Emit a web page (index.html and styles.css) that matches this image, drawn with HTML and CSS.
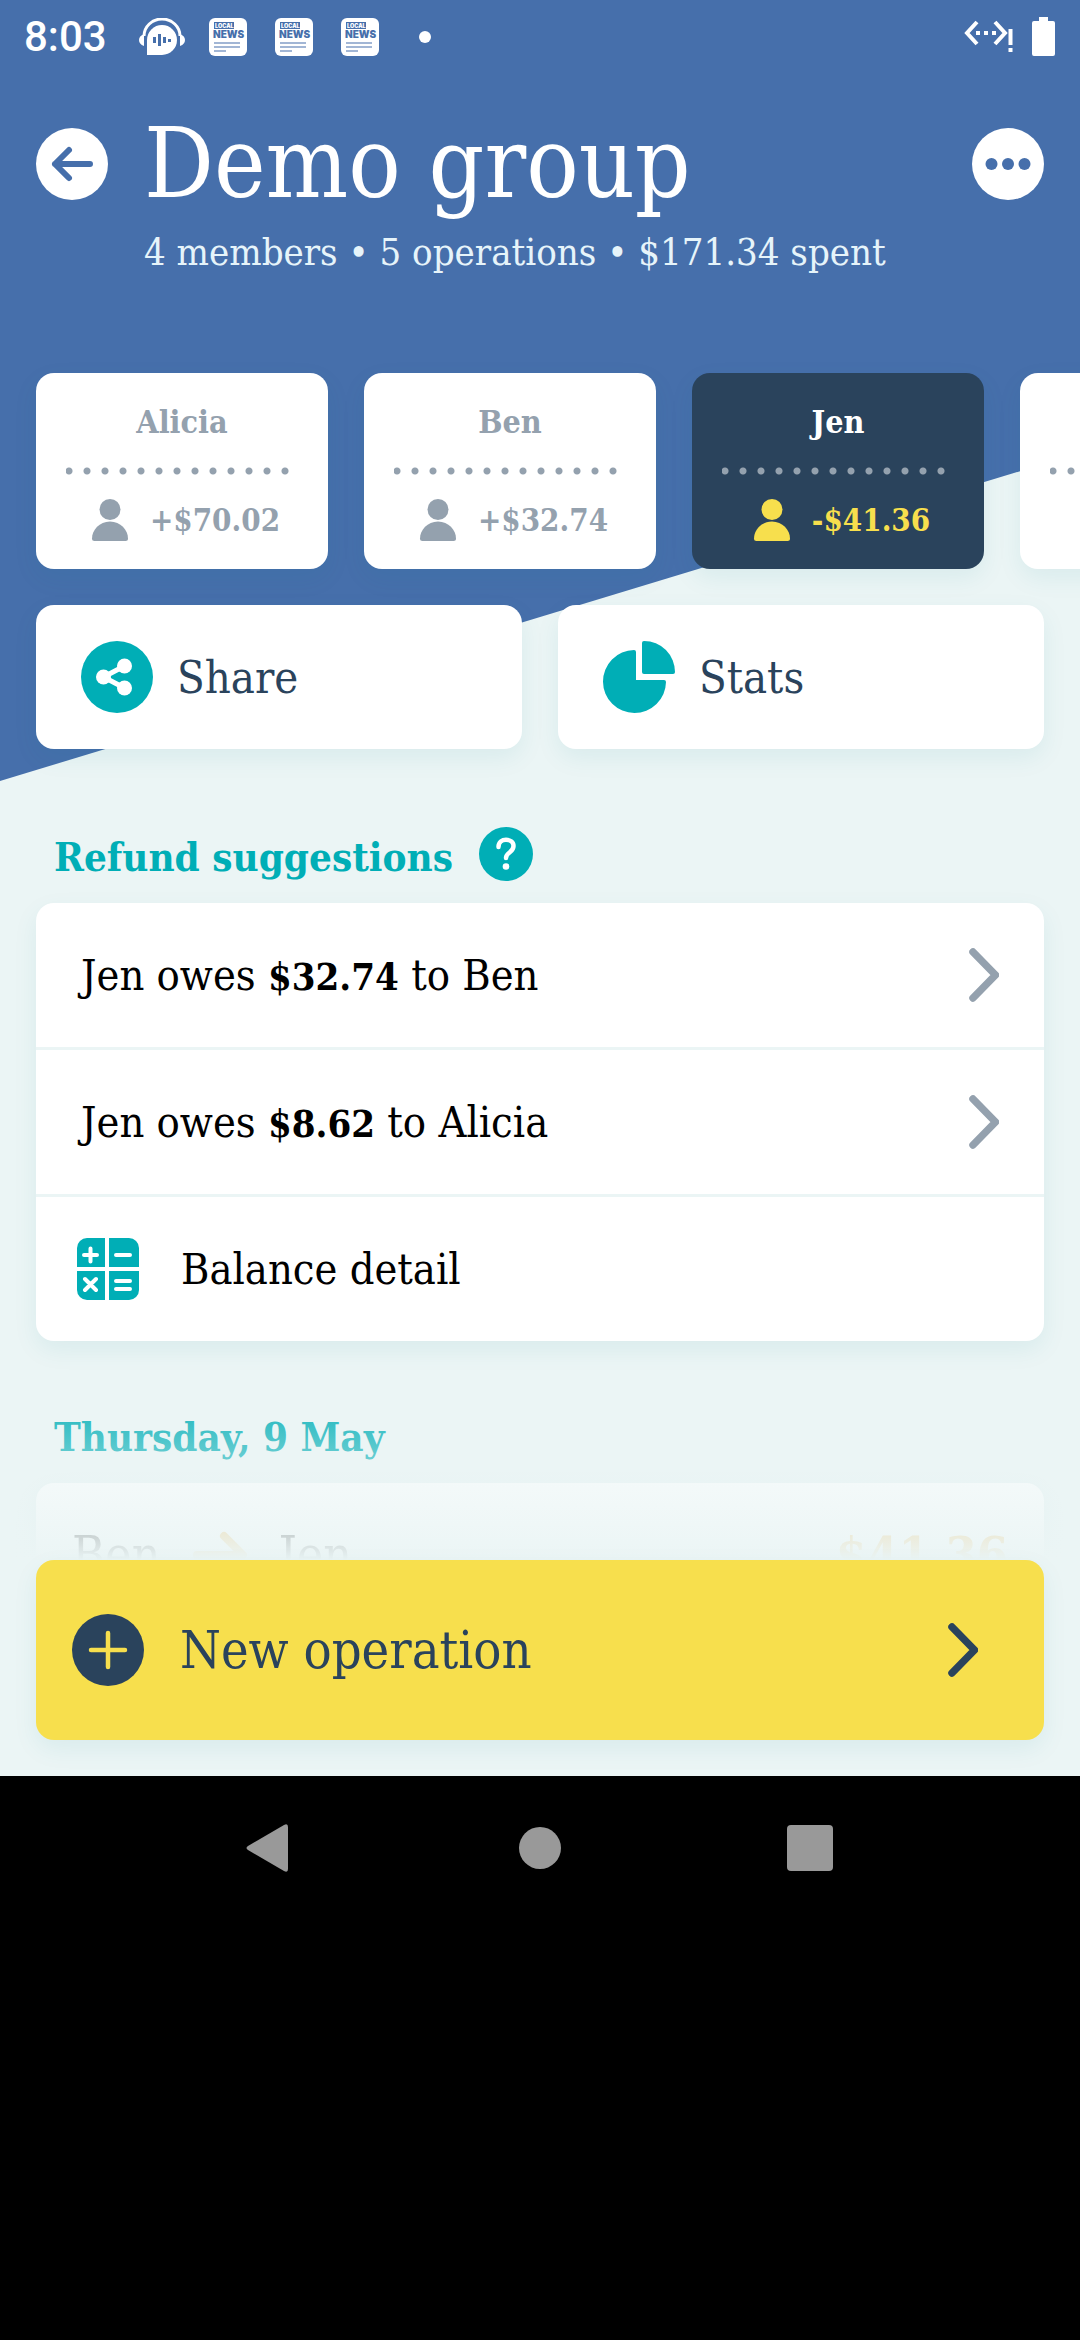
FILE: index.html
```
<!DOCTYPE html>
<html lang="en">
<head>
<meta charset="utf-8">
<meta name="viewport" content="width=device-width, initial-scale=1">
<title>Demo group</title>
<link rel="stylesheet" href="styles.css">
</head>
<body>
<svg class="sprite" aria-hidden="true">
  <symbol id="person" viewBox="0 0 44 42">
    <circle cx="26" cy="10.500" r="10.500"/>
    <path d="M26 22.500c10.500 0 18 8.500 18 17q0 2.500-2.500 2.500h-31q-2.500 0-2.500-2.500c0-8.500 7.500-17 18-17z"/>
  </symbol>
  <symbol id="chevron" viewBox="0 0 30 54">
    <path d="M4 4l22.500 23L4 50" fill="none" stroke="currentColor" stroke-width="7.500" stroke-linecap="round" stroke-linejoin="round"/>
  </symbol>
  <symbol id="news" viewBox="0 0 38 38">
    <rect width="38" height="38" rx="6" fill="#fff"/>
    <rect x="5" y="4" width="20" height="7" fill="#466fab"/>
    <text x="6" y="10" font-size="5.500" font-weight="900" fill="#fff">LOCAL</text>
    <text x="4" y="20" font-size="10" font-weight="900" fill="#466fab">NEWS</text>
    <path d="M5 25h26M5 29h26M5 33h12" stroke="#466fab" stroke-width="1.200"/>
  </symbol>
</svg>

<main class="screen">
  <div class="status">
    <span class="clock">8:03</span>
    <div class="notices">
      <svg class="headset" viewBox="0 0 46 38" aria-hidden="true">
        <path d="M5 18a18 17 0 0 1 36 0" fill="none" stroke="#fff" stroke-width="3"/>
        <path d="M5 16v12Q0 26 0 22t5-6zM41 16v12q5-2 5-6t-5-6z" fill="#fff"/>
        <path d="M8 37V22a15 15 0 1 1 15 15z" fill="#fff"/>
        <path d="M15.500 19v6M20.500 16v12M25.500 19v6M30.500 21v3" stroke="#466fab" stroke-width="3"/>
      </svg>
      <svg class="news"><use href="#news"/></svg>
      <svg class="news"><use href="#news"/></svg>
      <svg class="news"><use href="#news"/></svg>
      <span class="more-notices"></span>
    </div>
    <div class="system">
      <svg class="network" viewBox="0 0 50 34" aria-hidden="true">
        <path d="M13 2L3 13l10 11M31 2l10 11-10 11" fill="none" stroke="#fff" stroke-width="4"/>
        <path d="M12 13h20" stroke="#fff" stroke-width="4" stroke-dasharray="4 4"/>
        <path d="M46.500 9v16M46.500 28v4" stroke="#fff" stroke-width="4"/>
      </svg>
      <svg class="battery" viewBox="0 0 24 40" aria-hidden="true">
        <path d="M7 0h9v4h5q2 0 2 2v31q0 2-2 2H2q-2 0-2-2V6q0-2 2-2h5z" fill="#fff"/>
      </svg>
    </div>
  </div>

  <header class="header">
    <button class="round" type="button" aria-label="Back">
      <svg viewBox="0 0 72 72"><path d="M54 36H19M33 22L19 36l14 14" fill="none" stroke="#466fab" stroke-width="6" stroke-linecap="round" stroke-linejoin="round"/></svg>
    </button>
    <div class="heading">
      <h1 class="title">Demo group</h1>
      <p class="summary">4 members • 5 operations • $171.34 spent</p>
    </div>
    <button class="round" type="button" aria-label="More options">
      <svg viewBox="0 0 72 72" fill="#466fab"><circle cx="19.500" cy="36" r="6"/><circle cx="36" cy="36" r="6"/><circle cx="52.500" cy="36" r="6"/></svg>
    </button>
  </header>

  <ul class="members">
    <li class="member">
      <h2 class="name">Alicia</h2>
      <p class="balance"><svg class="person"><use href="#person"/></svg>+$70.02</p>
    </li>
    <li class="member">
      <h2 class="name">Ben</h2>
      <p class="balance"><svg class="person"><use href="#person"/></svg>+$32.74</p>
    </li>
    <li class="member current">
      <h2 class="name">Jen</h2>
      <p class="balance"><svg class="person"><use href="#person"/></svg>-$41.36</p>
    </li>
    <li class="member"><h2 class="name"></h2></li>
  </ul>

  <div class="actions">
    <button class="action" type="button">
      <svg viewBox="0 0 72 72" aria-hidden="true">
        <circle cx="36" cy="36" r="36" fill="#00aeb6"/>
        <path d="M43.500 25L22.500 36l21 11" fill="none" stroke="#fff" stroke-width="5"/>
        <g fill="#fff"><circle cx="43.500" cy="25" r="7.500"/><circle cx="22.500" cy="36" r="7.500"/><circle cx="43.500" cy="47" r="7.500"/></g>
      </svg>
      Share
    </button>
    <button class="action" type="button">
      <svg viewBox="0 0 72 72" fill="#00aeb6" aria-hidden="true">
        <path d="M39 2q0-2 2-2a31 31 0 0 1 31 31q0 2-2 2H41q-2 0-2-2z"/>
        <path d="M31 9q2 0 2 2v28h28q2 0 2 2a31.500 31.500 0 1 1-32-32z"/>
      </svg>
      Stats
    </button>
  </div>

  <section class="section">
    <div class="section-head">
      <h2 class="section-title">Refund suggestions</h2>
      <button class="help" type="button" aria-label="Help">
        <svg viewBox="0 0 54 54"><path d="M19.500 20c0-10 15-9 15-1 0 7-7.500 6-7.500 12" fill="none" stroke="#fff" stroke-width="4.500" stroke-linecap="round"/><circle cx="27" cy="39.500" r="3.300" fill="#fff"/></svg>
      </button>
    </div>
    <div class="card">
      <a class="row" href="#"><span>Jen owes <strong>$32.74</strong> to Ben</span><svg class="chevron"><use href="#chevron"/></svg></a>
      <a class="row" href="#"><span>Jen owes <strong>$8.62</strong> to Alicia</span><svg class="chevron"><use href="#chevron"/></svg></a>
      <a class="row detail" href="#">
        <svg class="calc" viewBox="0 0 62 62" aria-hidden="true">
          <rect width="62" height="62" rx="10" fill="#00aeb6"/>
          <path d="M30 0v62M0 31h62" stroke="#fff" stroke-width="4"/>
          <path d="M7 17h13M13.500 10.500v13M39 17h14M8 41l11 11M19 41L8 52M39 43h14M39 51h14" stroke="#fff" stroke-width="4" stroke-linecap="round"/>
        </svg>
        <span>Balance detail</span>
      </a>
    </div>
  </section>

  <section class="section">
    <div class="section-head"><h2 class="section-title">Thursday, 9 May</h2></div>
    <div class="card">
      <a class="transfer" href="#">
        <span>Ben</span>
        <svg class="arrow" viewBox="0 0 54 48" aria-hidden="true"><path d="M4 24h44M31 5l19 19-19 19" fill="none" stroke="#f2ab2e" stroke-width="8" stroke-linecap="round" stroke-linejoin="round"/></svg>
        <span>Jen</span>
        <strong class="sum">$41.36</strong>
      </a>
    </div>
  </section>

  <div class="dock">
    <button class="new" type="button">
      <svg class="plus" viewBox="0 0 72 72" aria-hidden="true"><circle cx="36" cy="36" r="36" fill="#2a435c"/><path d="M36 19v34M19 36h34" stroke="#f7df4d" stroke-width="4.500" stroke-linecap="round"/></svg>
      <span>New operation</span>
      <svg class="chevron"><use href="#chevron"/></svg>
    </button>
  </div>
</main>

<nav class="keys" aria-label="System">
  <button class="key" type="button" aria-label="Back"><svg viewBox="0 0 50 50"><path d="M3 23Q0 25 3 27l36 21q4 2 4-2V4q0-4-4-2z"/></svg></button>
  <button class="key" type="button" aria-label="Home"><svg viewBox="0 0 50 50"><circle cx="25" cy="25" r="21"/></svg></button>
  <button class="key" type="button" aria-label="Recents"><svg viewBox="0 0 50 50"><rect x="2" y="2" width="46" height="46" rx="4"/></svg></button>
</nav>
</body>
</html>
```
FILE: styles.css
```
:root {
  --blue: #466fab;
  --teal: #00aeb6;
  --navy: #2a435c;
  --grey: #94a1ae;
  --yellow: #f7df4d;
  --page: #ebf5f5;
  --shadow: 0 9px 24px rgba(0, 128, 140, 0.08);
}

* { box-sizing: border-box; margin: 0; padding: 0; }

body {
  height: 100vh;
  display: flex;
  flex-direction: column;
  background: #000;
  font-family: "Roboto Slab", "DejaVu Serif Condensed", "DejaVu Serif", serif;
}

button { border: 0; background: none; font: inherit; color: inherit; cursor: pointer; }
a { color: inherit; text-decoration: none; }
svg { display: block; flex: none; }
strong { font-weight: 700; }
.sprite { display: none; }

.screen {
  position: relative;
  z-index: 0;
  flex: 1;
  min-height: 0;
  overflow: hidden;
  background: var(--page);
}

.screen::before {
  content: "";
  position: absolute;
  z-index: -1;
  top: 0;
  left: 0;
  width: 100%;
  height: 781px;
  background: var(--blue);
  clip-path: polygon(0 0, 100% 0, 100% 58%, 0 100%);
}

.status {
  height: 74px;
  padding: 0 24px;
  display: flex;
  align-items: center;
  color: #fff;
}
.clock { font: 500 42px/48px Roboto, sans-serif; }
.notices { display: flex; align-items: center; gap: 28px; margin-left: 32px; }
.headset { width: 46px; height: 38px; margin-right: -4px; }
.news { width: 38px; height: 38px; font-family: Inter, sans-serif; }
.more-notices { width: 12px; height: 12px; margin-left: 12px; border-radius: 50%; background: #fff; }
.system { display: flex; align-items: center; gap: 18px; margin-left: auto; }
.network { width: 50px; height: 34px; }
.battery { width: 24px; height: 40px; }

.header { display: flex; gap: 36px; padding: 54px 36px 0; color: #fff; }
.round { width: 72px; height: 72px; flex: none; border-radius: 50%; background: #fff; }
.heading { flex: 1; }
.title { font-size: 97px; font-weight: 300; line-height: 72px; }
.summary { font-size: 38px; line-height: 48px; margin-top: 28px; color: #e6f4fa; }

.members { display: flex; gap: 36px; margin-top: 97px; padding: 0 36px; list-style: none; }
.member {
  flex: none;
  width: 292px;
  height: 196px;
  padding: 28px 30px;
  border-radius: 18px;
  background: #fff;
  color: var(--grey);
  text-align: center;
  box-shadow: var(--shadow);
}
.name {
  height: 74px;
  font-size: 32px;
  line-height: 42px;
  background: radial-gradient(circle, var(--grey) 3px, transparent 4px) -6px 100% / 18px 8px repeat-x;
}
.balance {
  display: flex;
  align-items: center;
  justify-content: center;
  gap: 22px;
  margin-top: 24px;
  font-size: 31px;
  font-weight: 700;
  line-height: 42px;
}
.person { width: 44px; height: 42px; fill: currentColor; }
.current { background: var(--navy); color: var(--yellow); }
.current .name { color: #fff; }

.actions { display: flex; gap: 36px; margin-top: 36px; padding: 0 36px; }
.action {
  flex: 1;
  height: 144px;
  padding: 0 45px;
  display: flex;
  align-items: center;
  gap: 24px;
  border-radius: 18px;
  background: #fff;
  color: var(--navy);
  font-size: 45px;
  box-shadow: var(--shadow);
}
.action svg { width: 72px; height: 72px; }

.section { padding: 0 36px; margin-top: 78px; }
.section + .section { margin-top: 66px; }
.section-head { display: flex; align-items: center; gap: 26px; height: 54px; margin-bottom: 22px; padding: 0 18px; }
.section-title { padding-top: 6px; font-size: 40px; line-height: 48px; color: var(--teal); }
.help { width: 54px; height: 54px; border-radius: 50%; background: var(--teal); }
.card { border-radius: 18px; background: #fff; box-shadow: var(--shadow); }
.row {
  height: 144px;
  padding: 0 45px;
  display: flex;
  align-items: center;
  justify-content: space-between;
  font-size: 43px;
  font-weight: 300;
  color: #000;
}
.row strong { font-size: 38px; }
.row + .row { margin-top: 3px; box-shadow: 0 -3px var(--page); }
.row.detail { justify-content: flex-start; gap: 42px; padding: 0 41px; }
.chevron { width: 30px; height: 54px; color: var(--grey); }
.calc { width: 62px; height: 62px; }
.transfer {
  height: 144px;
  padding: 0 36px;
  display: flex;
  align-items: center;
  gap: 32px;
  font-size: 50px;
  font-weight: 300;
}
.arrow { width: 54px; height: 48px; }
.sum { margin-left: auto; color: #f2ab2e; }

.dock {
  position: absolute;
  left: 0;
  right: 0;
  bottom: 0;
  padding: 180px 36px 36px;
  background: linear-gradient(rgba(235, 245, 245, 0), var(--page) 180px);
}
.new {
  width: 100%;
  height: 180px;
  padding: 0 66px 0 36px;
  display: flex;
  align-items: center;
  gap: 36px;
  border-radius: 18px;
  background: var(--yellow);
  color: var(--navy);
  font-size: 52px;
  box-shadow: var(--shadow);
}
.plus { width: 72px; height: 72px; }
.new .chevron { margin-left: auto; color: var(--navy); }

.keys {
  display: flex;
  justify-content: center;
  gap: 220px;
  padding: 47px 0 467px;
}
.key { width: 50px; height: 50px; fill: #999; }
```
